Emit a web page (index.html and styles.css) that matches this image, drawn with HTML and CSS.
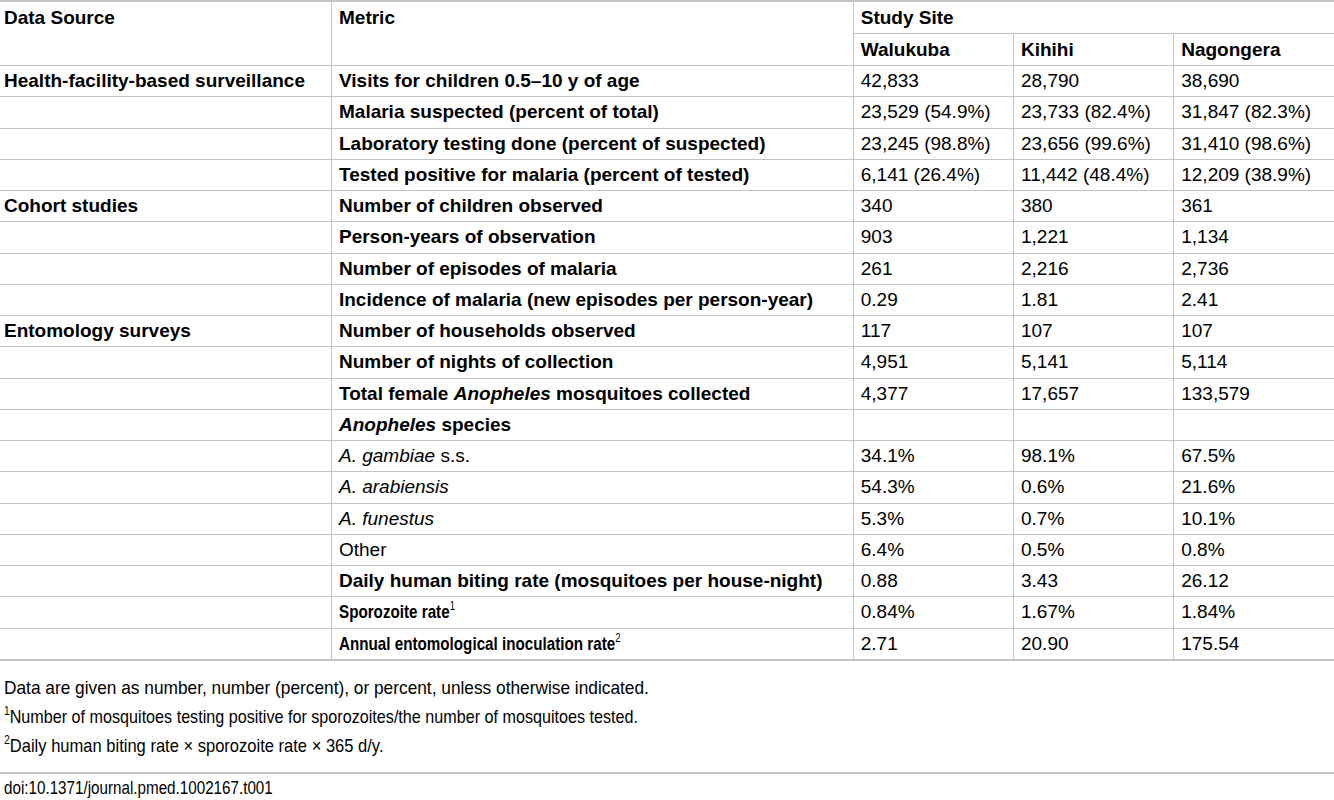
FILE: index.html
```html
<!DOCTYPE html>
<html lang="en">
<head>
  <meta charset="UTF-8">
  <title>Table 1. Study sites</title>
  <link rel="stylesheet" href="styles.css">
</head>
<body>

<table class="data">
  <colgroup>
    <col class="c-src">
    <col class="c-metric">
    <col class="c-site">
    <col class="c-site">
    <col class="c-site">
  </colgroup>
  <thead>
    <tr class="head1">
      <th rowspan="2" class="first">Data Source</th>
      <th rowspan="2">Metric</th>
      <th colspan="3">Study Site</th>
    </tr>
    <tr class="head2">
      <th>Walukuba</th>
      <th>Kihihi</th>
      <th>Nagongera</th>
    </tr>
  </thead>
  <tbody>
    <tr>
      <td class="first"><b>Health-facility-based surveillance</b></td>
      <td><b>Visits for children 0.5–10 y of age</b></td>
      <td>42,833</td><td>28,790</td><td>38,690</td>
    </tr>
    <tr>
      <td class="first"></td>
      <td><b>Malaria suspected (percent of total)</b></td>
      <td>23,529 (54.9%)</td><td>23,733 (82.4%)</td><td>31,847 (82.3%)</td>
    </tr>
    <tr>
      <td class="first"></td>
      <td><b>Laboratory testing done (percent of suspected)</b></td>
      <td>23,245 (98.8%)</td><td>23,656 (99.6%)</td><td>31,410 (98.6%)</td>
    </tr>
    <tr>
      <td class="first"></td>
      <td><b>Tested positive for malaria (percent of tested)</b></td>
      <td>6,141 (26.4%)</td><td>11,442 (48.4%)</td><td>12,209 (38.9%)</td>
    </tr>
    <tr>
      <td class="first"><b>Cohort studies</b></td>
      <td><b>Number of children observed</b></td>
      <td>340</td><td>380</td><td>361</td>
    </tr>
    <tr>
      <td class="first"></td>
      <td><b>Person-years of observation</b></td>
      <td>903</td><td>1,221</td><td>1,134</td>
    </tr>
    <tr>
      <td class="first"></td>
      <td><b>Number of episodes of malaria</b></td>
      <td>261</td><td>2,216</td><td>2,736</td>
    </tr>
    <tr>
      <td class="first"></td>
      <td><b>Incidence of malaria (new episodes per person-year)</b></td>
      <td>0.29</td><td>1.81</td><td>2.41</td>
    </tr>
    <tr>
      <td class="first"><b>Entomology surveys</b></td>
      <td><b>Number of households observed</b></td>
      <td>117</td><td>107</td><td>107</td>
    </tr>
    <tr>
      <td class="first"></td>
      <td><b>Number of nights of collection</b></td>
      <td>4,951</td><td>5,141</td><td>5,114</td>
    </tr>
    <tr>
      <td class="first"></td>
      <td><b>Total female <i>Anopheles</i> mosquitoes collected</b></td>
      <td>4,377</td><td>17,657</td><td>133,579</td>
    </tr>
    <tr>
      <td class="first"></td>
      <td><b><i>Anopheles</i> species</b></td>
      <td></td><td></td><td></td>
    </tr>
    <tr>
      <td class="first"></td>
      <td><i>A. gambiae</i> s.s.</td>
      <td>34.1%</td><td>98.1%</td><td>67.5%</td>
    </tr>
    <tr>
      <td class="first"></td>
      <td><i>A. arabiensis</i></td>
      <td>54.3%</td><td>0.6%</td><td>21.6%</td>
    </tr>
    <tr>
      <td class="first"></td>
      <td><i>A. funestus</i></td>
      <td>5.3%</td><td>0.7%</td><td>10.1%</td>
    </tr>
    <tr>
      <td class="first"></td>
      <td>Other</td>
      <td>6.4%</td><td>0.5%</td><td>0.8%</td>
    </tr>
    <tr>
      <td class="first"></td>
      <td><b>Daily human biting rate (mosquitoes per house-night)</b></td>
      <td>0.88</td><td>3.43</td><td>26.12</td>
    </tr>
    <tr>
      <td class="first"></td>
      <td><span class="cond"><b>Sporozoite rate</b><sup>1</sup></span></td>
      <td>0.84%</td><td>1.67%</td><td>1.84%</td>
    </tr>
    <tr>
      <td class="first"></td>
      <td><span class="cond"><b>Annual entomological inoculation rate</b><sup>2</sup></span></td>
      <td>2.71</td><td>20.90</td><td>175.54</td>
    </tr>
  </tbody>
</table>

<div class="notes">
  <p class="note-a">Data are given as number, number (percent), or percent, unless otherwise indicated.</p>
  <p class="note-b"><sup>1</sup>Number of mosquitoes testing positive for sporozoites/the number of mosquitoes tested.</p>
  <p class="note-c"><sup>2</sup>Daily human biting rate × sporozoite rate × 365 d/y.</p>
</div>

<div class="doi"><span class="cond">doi:10.1371/journal.pmed.1002167.t001</span></div>

</body>
</html>
```

FILE: styles.css
```css
body {
  margin: 0;
  font-family: "Liberation Sans", Arial, sans-serif;
  font-size: 19px;
  color: #000;
  background: #fff;
}
.data {
  width: 1334px;
  border-collapse: collapse;
  table-layout: fixed;
  border-top: 2px solid #c4c4c4;
  border-bottom: 2px solid #c4c4c4;
}
.c-src { width: 331px; }
.c-metric { width: 521px; }
.c-site { width: 160px; }
.data th,
.data td {
  border: 1px solid #c4c4c4;
  padding: 0 7px;
  text-align: left;
  vertical-align: middle;
  white-space: nowrap;
}
.data th {
  font-weight: bold;
  height: 31px;
}
.data thead th[rowspan] {
  vertical-align: top;
  padding-top: 5px;
}
.data tr > :first-child { border-left: none; }
.data tr > :last-child { border-right: none; }
.data td { height: 30.25px; }
.data .first { padding-left: 4px; }
sup {
  font-size: 12px;
  line-height: 0;
  vertical-align: 8px;
}
/* the source set these runs in a condensed face */
.cond {
  display: inline-block;
  transform: scaleX(0.8);
  transform-origin: 0 50%;
}
.notes {
  padding: 12px 4px 12px;
  border-bottom: 2px solid #c4c4c4;
}
.notes p {
  margin: 0;
  line-height: 29px;
  white-space: nowrap;
  transform-origin: 0 50%;
}
.note-a { transform: scaleX(0.91); }
.note-b { transform: scaleX(0.85); }
.note-c { transform: scaleX(0.87); }
.doi {
  padding: 3px 4px;
}
```
